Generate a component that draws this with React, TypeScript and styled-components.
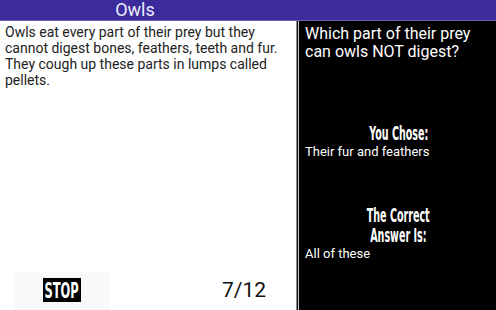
import React from "react";
import styled, { createGlobalStyle } from "styled-components";

const Global = createGlobalStyle`
  html, body { margin: 0; padding: 0; background: #fff; }
  body { font-family: Roboto, "Noto Sans", sans-serif; }
`;

const Screen = styled.div`
  width: 496px;
  height: 310px;
  display: flex;
  flex-direction: column;
  overflow: hidden;
`;

const Header = styled.div`
  height: 20px;
  flex: none;
  background: #3b2b9b;
  border-bottom: 1px solid #6a5cc0;
  display: flex;
  align-items: center;
`;

const Title = styled.div`
  width: 270px;
  text-align: center;
  color: #ececff;
  font-size: 18px;
  line-height: 20px;
`;

const Body = styled.div`
  flex: 1;
  display: flex;
  min-height: 0;
`;

const LeftPanel = styled.div`
  width: 296px;
  flex: none;
  display: flex;
  flex-direction: column;
  background: #fff;
`;

const Passage = styled.p`
  margin: 0;
  padding: 3px 12px 0 5px;
  font-size: 14px;
  line-height: 16px;
  color: #222;
  flex: 1;
`;

const Footer = styled.div`
  height: 38px;
  flex: none;
  display: flex;
  align-items: center;
`;

const StopArea = styled.div`
  margin-left: 14px;
  width: 96px;
  height: 38px;
  background: #f9f9f9;
  display: flex;
  align-items: flex-start;
  justify-content: center;
  padding-top: 6px;
  box-sizing: border-box;
`;

const StopLabel = styled.div`
  width: 38px;
  height: 24px;
  background: #000;
  display: flex;
  align-items: center;
  justify-content: center;
  overflow: hidden;
`;

const Condensed = styled.span<{ $size: number; $scale: number }>`
  display: inline-block;
  font-family: "DejaVu Sans Condensed", "DejaVu Sans", sans-serif;
  font-weight: bold;
  font-size: ${(p) => p.$size}px;
  transform: scaleX(${(p) => p.$scale});
  white-space: nowrap;
`;

const Counter = styled.div`
  margin-left: 112px;
  font-size: 21px;
  color: #111;
  padding-bottom: 2px;
`;

const Divider = styled.div`
  width: 4px;
  flex: none;
  display: flex;
`;

const Rule = styled.div<{ $c: string }>`
  width: 1px;
  background: ${(p) => p.$c};
`;

const RightPanel = styled.div`
  flex: 1;
  background: #000;
  color: #fff;
  display: flex;
  flex-direction: column;
  padding: 4px 4px 0 5px;
`;

const Question = styled.div`
  font-size: 16px;
  line-height: 18px;
`;

const Heading = styled.div<{ $top: number }>`
  margin-top: ${(p) => p.$top}px;
  text-align: center;
  color: #fff;
  line-height: 19px;
`;

const AnswerText = styled.div`
  font-size: 13px;
  line-height: 15px;
`;

export default function App() {
  return (
    <>
      <Global />
      <Screen>
        <Header>
          <Title>Owls</Title>
        </Header>
        <Body>
          <LeftPanel>
            <Passage>
              Owls eat every part of their prey but they cannot digest bones,
              feathers, teeth and fur. They cough up these parts in lumps
              called pellets.
            </Passage>
            <Footer>
              <StopArea>
                <StopLabel>
                  <Condensed $size={22} $scale={0.58} style={{ color: "#fff" }}>
                    STOP
                  </Condensed>
                </StopLabel>
              </StopArea>
              <Counter>7/12</Counter>
            </Footer>
          </LeftPanel>
          <Divider>
            <Rule $c="#8a8a8a" />
            <Rule $c="#111" />
            <Rule $c="#c8c8c8" />
            <Rule $c="#000" />
          </Divider>
          <RightPanel>
            <Question>
              Which part of their prey
              <br />
              can owls NOT digest?
            </Question>
            <Heading $top={63}>
              <Condensed $size={19} $scale={0.56}>You Chose:</Condensed>
            </Heading>
            <AnswerText>Their fur and feathers</AnswerText>
            <Heading $top={47}>
              <Condensed $size={19} $scale={0.56}>The Correct</Condensed>
              <br />
              <Condensed $size={19} $scale={0.56}>Answer Is:</Condensed>
            </Heading>
            <AnswerText>All of these</AnswerText>
          </RightPanel>
        </Body>
      </Screen>
    </>
  );
}
